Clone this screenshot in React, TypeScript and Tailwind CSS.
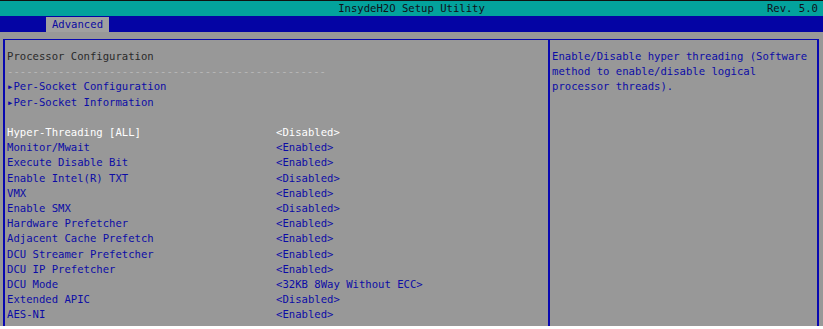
const rows: [string, string][] = [
  ['Hyper-Threading [ALL]', '<Disabled>'],
  ['Monitor/Mwait', '<Enabled>'],
  ['Execute Disable Bit', '<Enabled>'],
  ['Enable Intel(R) TXT', '<Disabled>'],
  ['VMX', '<Enabled>'],
  ['Enable SMX', '<Disabled>'],
  ['Hardware Prefetcher', '<Enabled>'],
  ['Adjacent Cache Prefetch', '<Enabled>'],
  ['DCU Streamer Prefetcher', '<Enabled>'],
  ['DCU IP Prefetcher', '<Enabled>'],
  ['DCU Mode', '<32KB 8Way Without ECC>'],
  ['Extended APIC', '<Disabled>'],
  ['AES-NI', '<Enabled>'],
]

export default function App() {
  return (
    <div className="h-[329px] w-[823px] overflow-hidden bg-white font-['DejaVu_Sans_Mono',monospace] text-[10.6px] leading-[15.2px]">
      {/* Title bar */}
      <div className="relative flex h-[16px] items-center justify-center border-t border-[#101010] bg-[#03a29c] text-[#101018]">
        <span>InsydeH2O Setup Utility</span>
        <span className="absolute right-[5px]">Rev. 5.0</span>
      </div>

      {/* Tab bar */}
      <div className="flex h-[16px] items-end bg-[#0404a4] pl-[46px]">
        <div className="flex h-[15px] w-[63px] items-center justify-center bg-[#a0a0a0] text-[#0a0aa0]">
          Advanced
        </div>
      </div>

      {/* Main area */}
      <div className="flex h-[294px] bg-[#989898] pl-[3px] pr-[4px] pt-[7px] text-[#0c0ca6]">
        <div className="flex flex-1 border-l-2 border-t border-[#0808b0]">
          {/* Left pane */}
          <div className="w-[545px] border-r-2 border-[#0808b0] pl-[2px] pt-[9px]">
            <div className="text-[#2a2a2a]">Processor Configuration</div>
            <div className="text-[#b8b8b8]">{'-'.repeat(50)}</div>
            <div>▸Per-Socket Configuration</div>
            <div>▸Per-Socket Information</div>
            <div>&nbsp;</div>
            {rows.map(([label, value], i) => (
              <div key={label} className={`flex ${i === 0 ? 'text-white' : ''}`}>
                <span className="w-[269px] shrink-0">{label}</span>
                <span>{value}</span>
              </div>
            ))}
          </div>

          {/* Help pane */}
          <div className="flex-1 border-r-2 border-[#0808b0] pl-[2px] pt-[9px]">
            <div>Enable/Disable hyper threading (Software</div>
            <div>method to enable/disable logical</div>
            <div>processor threads).</div>
          </div>
        </div>
      </div>
    </div>
  )
}
